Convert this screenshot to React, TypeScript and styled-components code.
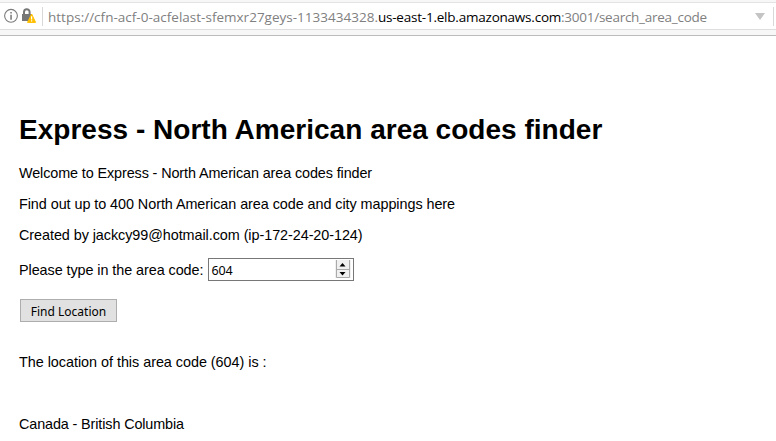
import React from 'react';
import styled, { createGlobalStyle } from 'styled-components';

const Global = createGlobalStyle`
  body { margin: 0; background: #fff; color: #000; font: 14.4px/16px "Liberation Sans", Arial, sans-serif; overflow: hidden; }
`;
const Toolbar = styled.header`
  box-sizing: border-box; height: 36px; padding-top: 2px;
  background: #f7f7f7; border-bottom: 1px solid #bcbcbc;
`;
const AddressBar = styled.div`
  display: flex; align-items: center; box-sizing: border-box; height: 28px; padding: 0 2px 0 3px;
  background: #fff; border-top: 1px solid #e3e3e3; border-bottom: 1px solid #dedede;
  font: 13.5px "Open Sans", sans-serif; color: #808080;
`;
const Icons = styled.svg`width: 36px; height: 18px; flex: none; margin-right: 3px;`;
const Divider = styled.i`width: 1px; height: 19px; background: #d8d8d8;`;
const Url = styled.span`flex: 1; margin-left: 5px; padding-top: 2px; white-space: nowrap; letter-spacing: 0.01px;`;
const Host = styled.span`color: #000; letter-spacing: -0.22px;`;
const Path = styled.span`letter-spacing: -0.26px;`;
const Arrow = styled.svg`width: 10px; height: 7px; margin-right: 8px;`;
const Main = styled.main`padding: 77px 19px 0;`;
const Title = styled.h1`margin: 0 0 18px; font-size: 28px; line-height: 34px; white-space: nowrap; letter-spacing: 0.02px;`;
const Line = styled.p<{ $gap?: number; $tracking?: number }>`
  margin: 0 0 ${p => p.$gap ?? 15}px; white-space: nowrap; letter-spacing: ${p => p.$tracking ?? -0.06}px;
`;
const Field = styled.label`
  display: flex; align-items: center; height: 23px; gap: 5px; margin-bottom: 18px; letter-spacing: -0.07px;
`;
const NumberBox = styled.span`
  display: flex; align-items: center; justify-content: space-between; box-sizing: border-box;
  width: 146px; height: 23px; padding: 0 2px; border: 1px solid #777;
  font: 12.5px "Noto Sans", sans-serif; letter-spacing: 0;
`;
const Value = styled.span`padding-top: 2px; letter-spacing: -0.1px;`;
const Spinner = styled.svg`width: 16px; height: 18px; margin-bottom: 1px;`;
const Submit = styled.button`
  display: block; width: 97px; height: 23px; margin: 0 0 32px 1px; padding: 1px 0 0; border: 1px solid #adadad;
  background: #e1e1e1; color: #000; font: 12px "Noto Sans", sans-serif;
`;

function SecurityIcons() {
  return (
    <Icons viewBox="0 0 36 18">
      <circle cx="8" cy="8.8" r="6.4" fill="none" stroke="#7c7c7c" strokeWidth="1.1" />
      <path d="M7.3 5h1.5v1.5H7.3zM7.3 7.8h1.5v5H7.3z" fill="#777" />
      <path d="M21 7V5a2.8 2.8 0 0 1 5.6 0v2" fill="none" stroke="#777" strokeWidth="2" />
      <path d="M19 7h9.3v7H19z" fill="#777" />
      <path d="M28.6 7 32.6 15.4H24.5z" fill="#ffbf00" stroke="#ffbf00" strokeWidth="1" strokeLinejoin="round" />
      <path d="M28 9.2h1.2v3.2H28zM28 13.3h1.2v1.2H28z" fill="#fff" />
    </Icons>
  );
}

function Stepper() {
  return (
    <Spinner viewBox="0 0 16 18">
      <path d="M0 0h16v18H0z" fill="#f0f0f0" />
      <path d="M1.5 0v17.5h13V0M1 9.5h14" fill="none" stroke="#aaa" />
      <path d="M4.5 6.5h6L7.5 3zM4.5 12h6l-3 3.5z" fill="#000" />
    </Spinner>
  );
}

export default function App() {
  return (
    <>
      <Global />
      <Toolbar>
        <AddressBar>
          <SecurityIcons />
          <Divider />
          <Url>https://cfn-acf-0-acfelast-sfemxr27geys-1133434328.<Host>us-east-1.elb.amazonaws.com</Host><Path>:3001/search_area_code</Path></Url>
          <Arrow viewBox="0 0 10 7"><path d="M0 0h10L5 7z" fill="#c4c4c4" /></Arrow>
          <Divider />
        </AddressBar>
      </Toolbar>
      <Main>
        <Title>Express - North American area codes finder</Title>
        <Line $tracking={-0.11}>Welcome to Express - North American area codes finder</Line>
        <Line>Find out up to 400 North American area code and city mappings here</Line>
        <Line>Created by jackcy99@hotmail.com (ip-172-24-20-124)</Line>
        <Field>Please type in the area code:<NumberBox><Value>604</Value><Stepper /></NumberBox></Field>
        <Submit>Find Location</Submit>
        <Line $gap={46} $tracking={-0.03}>The location of this area code (604) is :</Line>
        <Line $tracking={-0.12}>Canada - British Columbia</Line>
      </Main>
    </>
  );
}
